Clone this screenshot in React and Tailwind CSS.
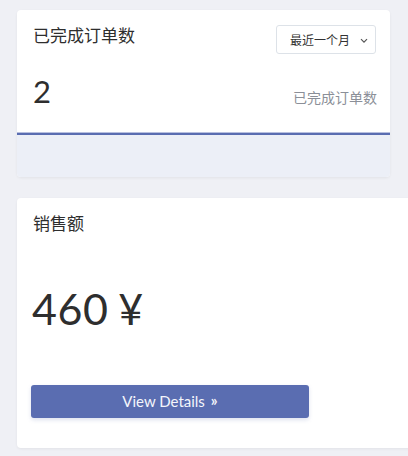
import React from "react";

const FONT = { fontFamily: '"Nunito", Lato, "Noto Sans CJK SC", sans-serif' };

export default function App() {
  return (
    <div className="w-[408px] h-[456px] overflow-hidden bg-[#eff0f5]" style={FONT}>
      <div className="pt-[10px] pl-[17px] flex flex-col gap-[21px]">
        <div className="w-[373px] h-[167px] bg-white rounded-[4px] shadow-[0_1px_3px_rgba(0,0,0,0.06)] flex flex-col overflow-hidden">
          <div className="flex justify-between items-start pl-4 pr-[14px] pt-[15px]">
            <div className="text-[17px] leading-[24px] text-[#2e2e2e] -mt-[2px]" style={{ fontFamily: '"Noto Sans CJK SC", sans-serif' }}>已完成订单数</div>
            <div className="w-[100px] h-[29px] border border-[#dde2e8] rounded-[3px] flex items-center pl-[13px] pr-[7px] justify-between">
              <span className="text-[12px] text-[#333]" style={{ fontFamily: '"Noto Sans CJK SC", sans-serif' }}>最近一个月</span>
              <svg width="8" height="6" viewBox="0 0 8 6" className="mt-[2px]">
                <path d="M1 1.2 L4 4.2 L7 1.2" fill="none" stroke="#555" strokeWidth="1.2" />
              </svg>
            </div>
          </div>
          <div className="flex justify-between items-end pl-4 pr-[13px] mt-[19px]">
            <div className="text-[31px] leading-[36px] text-[#2e2e2e]" style={{ fontFamily: 'Lato, sans-serif' }}>2</div>
            <div className="text-[14px] leading-[20px] text-[#8b8f98] mb-[2px]" style={{ fontFamily: '"Noto Sans CJK SC", sans-serif' }}>已完成订单数</div>
          </div>
          <div className="mt-[23px] h-[1px] bg-[#b8c0df]" />
          <div className="h-[2px] bg-[#5a6db1]" />
          <div className="flex-1 bg-[#eceff7]" />
        </div>

        <div className="w-[400px] h-[250px] bg-white rounded-[4px] shadow-[0_1px_3px_rgba(0,0,0,0.06)] pl-[14px] pt-[13px] flex flex-col">
          <div className="pl-[2px] text-[17px] leading-[24px] text-[#2e2e2e]" style={{ fontFamily: '"Noto Sans CJK SC", sans-serif' }}>销售额</div>
          <div className="pl-[1px] mt-[47px] text-[43px] leading-[54px] text-[#2e2e2e] flex items-baseline" style={{ fontFamily: 'Lato, sans-serif' }}>
            <span className="tracking-[0.5px]">460</span>
            <span className="ml-[10px]">¥</span>
          </div>
          <button className="mt-[49px] w-[278px] h-[33px] rounded-[3px] bg-[#5a6db1] text-[#f4f6fb] text-[15px] flex items-center justify-center gap-[6px] shadow-[0_2px_4px_rgba(90,109,177,0.2)]" style={{ fontFamily: 'Lato, sans-serif' }}>
            <span>View Details</span>
            <span className="text-[15px] font-bold leading-none mb-[2px]">»</span>
          </button>
        </div>
      </div>
    </div>
  );
}
